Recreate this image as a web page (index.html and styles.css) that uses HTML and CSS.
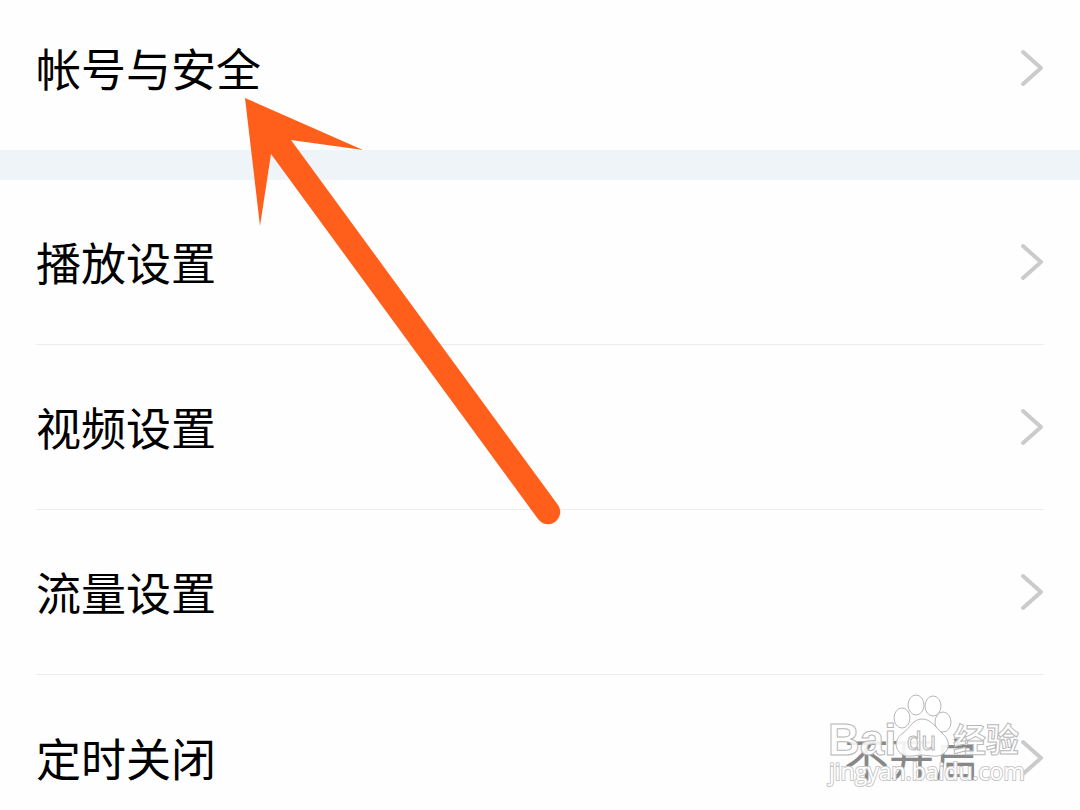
FILE: index.html
```
<!DOCTYPE html>
<html lang="zh-CN">
<head>
    <meta charset="UTF-8">
    <meta name="viewport" content="width=device-width, initial-scale=1.0">
    <title>设置</title>
    <link rel="stylesheet" href="styles.css">
</head>
<body>
    <main class="settings">
        <nav class="group account">
            <a class="row" href="#account">
                <span class="label">帐号与安全</span>
                <svg class="chevron" viewBox="0 0 24 38"><path d="M3 3 L21 19 L3 35"/></svg>
            </a>
        </nav>

        <nav class="group">
            <a class="row" href="#play">
                <span class="label">播放设置</span>
                <svg class="chevron" viewBox="0 0 24 38"><path d="M3 3 L21 19 L3 35"/></svg>
            </a>
            <a class="row" href="#video">
                <span class="label">视频设置</span>
                <svg class="chevron" viewBox="0 0 24 38"><path d="M3 3 L21 19 L3 35"/></svg>
            </a>
            <a class="row" href="#data">
                <span class="label">流量设置</span>
                <svg class="chevron" viewBox="0 0 24 38"><path d="M3 3 L21 19 L3 35"/></svg>
            </a>
            <a class="row" href="#timer">
                <span class="label">定时关闭</span>
                <span class="value">不开启</span>
                <svg class="chevron" viewBox="0 0 24 38"><path d="M3 3 L21 19 L3 35"/></svg>
            </a>
        </nav>
    </main>

    <!-- Arrow pointing at the account row -->
    <svg class="arrow" viewBox="0 0 320 430" aria-hidden="true">
        <path d="M0 0 L118 52 L46 42 L313 407 A12 12 0 0 1 293 421 L26 56 L15 128 Z"/>
    </svg>

    <!-- Watermark -->
    <svg class="watermark" viewBox="0 0 200 100" role="img" aria-label="Baidu 经验">
        <text class="brand" x="2" y="65">Bai</text>
        <g class="paw">
            <ellipse cx="76" cy="28" rx="8" ry="10"/>
            <ellipse cx="90" cy="15" rx="8" ry="10"/>
            <ellipse cx="107" cy="16" rx="8" ry="10"/>
            <ellipse cx="117" cy="32" rx="8" ry="10"/>
            <path d="M96 29 C87 29 84 38 77 43 C64 52 71 68 86 66 Q96 64 106 66 C121 68 128 54 117 44 C109 37 105 29 96 29 Z"/>
        </g>
        <text class="du" x="81" y="60">du</text>
        <text class="jingyan" x="127" y="62">经验</text>
        <text class="site" x="3" y="90">jingyan.baidu.com</text>
    </svg>
</body>
</html>
```

FILE: styles.css
```
* {
    margin: 0;
    padding: 0;
    box-sizing: border-box;
}

body {
    position: relative;
    height: 100vh;
    overflow: hidden;
    background: #fefefe;
    color: #000;
    font-family: "Noto Sans CJK SC", "Noto Sans", sans-serif;
}

.group {
    padding: 0 36px;
}

/* the list is scrolled slightly past its top edge */
.account {
    margin-top: -15px;
    border-bottom: 30px solid #eff4f8;
}

.row {
    display: flex;
    align-items: center;
    height: 165px;
    border-bottom: 1px solid #ededed;
    color: inherit;
    text-decoration: none;
    font-size: 45px;
    line-height: 66px;
}

.row:last-child {
    border-bottom: none;
}

.label {
    flex: 1;
}

.value {
    margin-right: 41px;
    color: #888;
}

.chevron {
    width: 24px;
    height: 38px;
    fill: none;
    stroke: #cbcbcb;
    stroke-width: 4;
    stroke-linecap: round;
    stroke-linejoin: round;
}

.arrow {
    position: absolute;
    left: 245px;
    top: 98px;
    width: 320px;
    height: 430px;
    fill: #ff5f1a;
    pointer-events: none;
}

.watermark {
    position: absolute;
    right: 54px;
    top: 690px;
    width: 200px;
    height: 100px;
    overflow: visible;
    fill: rgba(255, 255, 255, 0.9);
    stroke: #b8b8b8;
    stroke-width: 1;
    pointer-events: none;
}

.brand {
    font: bold 44px "Liberation Sans", sans-serif;
}

.du {
    font: 26px "Liberation Sans", sans-serif;
}

.jingyan {
    font: bold 33px "Noto Sans CJK SC", sans-serif;
}

.site {
    font: 23px "Open Sans", sans-serif;
    paint-order: stroke;
    stroke: #c8c8c8;
    stroke-width: 2;
    fill: #fff;
}
```
